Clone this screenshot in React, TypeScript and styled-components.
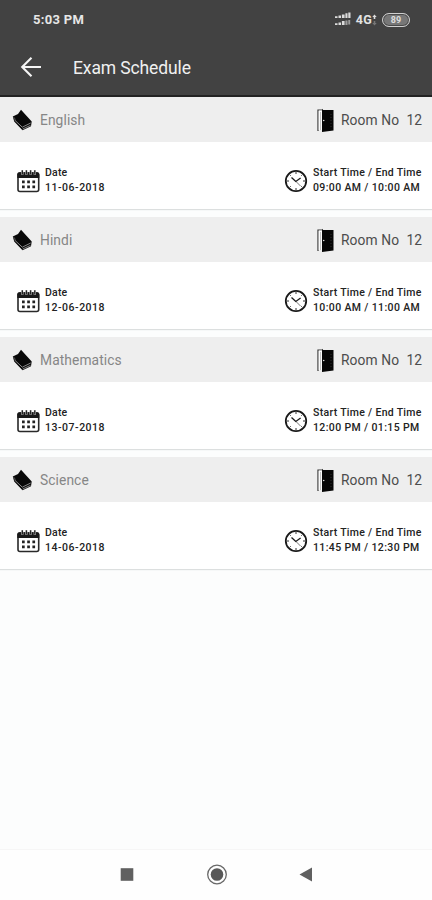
import React from "react";
import styled, { createGlobalStyle } from "styled-components";

const GlobalStyle = createGlobalStyle`
  * { box-sizing: border-box; }
  body { margin: 0; background: #fcfdfd; font-family: Roboto, "Liberation Sans", sans-serif; }
  svg { display: block; flex: none; }
`;

const Screen = styled.div`
  width: 432px;
  height: 900px;
  display: flex;
  flex-direction: column;
  overflow: hidden;
  background: #fcfdfd;
`;

const TopArea = styled.header`
  height: 97px;
  flex: none;
  background: #424242;
  border-bottom: 2px solid #222;
  color: #f4f4f4;
`;

const StatusBar = styled.div`
  height: 39px;
  padding: 0 22px 0 33px;
  display: flex;
  align-items: center;
  justify-content: space-between;
`;

const Clock = styled.span`
  font-size: 13px;
  font-weight: 700;
  letter-spacing: 0.3px;
  color: #e6e6e6;
`;

const StatusIcons = styled.div`
  display: flex;
  align-items: center;
`;

const Network = styled.span`
  margin-left: 4px;
  font-size: 12.5px;
  font-weight: 700;
  letter-spacing: 0.3px;
  color: #e2e2e2;
`;

const Battery = styled.span`
  width: 28px;
  height: 14px;
  margin-left: 5px;
  border: 1.5px solid #cfcfcf;
  border-radius: 7px;
  display: flex;
  align-items: center;
  justify-content: center;
  font-size: 9px;
  font-weight: 700;
  color: #ddd;
  background: #777;
  box-shadow: inset 0 0 0 1px #4a4a4a;
`;

const TitleBar = styled.div`
  height: 56px;
  padding-left: 20px;
  display: flex;
  align-items: center;
  gap: 31px;
`;

const Title = styled.h1`
  margin: 0;
  padding-top: 1px;
  font-size: 17.5px;
  font-weight: 400;
  letter-spacing: -0.12px;
  color: #f0f0f0;
`;

const List = styled.main`
  flex: 1;
`;

const Card = styled.section`
  height: 112px;
  margin-bottom: 8px;
  background: #fff;
  box-shadow: 0 1px 1px #dcdfdf;
`;

const Band = styled.div`
  height: 45px;
  padding: 1px 10px 0 12px;
  display: flex;
  align-items: center;
  justify-content: space-between;
  background: #eee;
`;

const Group = styled.div<{ $gap: number }>`
  display: flex;
  align-items: center;
  gap: ${(p) => p.$gap}px;
`;

const Subject = styled.span`
  font-size: 13.8px;
  line-height: 16px;
  letter-spacing: 0.08px;
  color: #868686;
`;

const Room = styled.span`
  font-size: 13.8px;
  line-height: 16px;
  width: 81px;
  letter-spacing: 0.12px;
  white-space: pre;
  color: #4c4c4c;
`;

const Details = styled.div`
  height: 67px;
  padding: 10px 10px 0 17px;
  display: flex;
  align-items: center;
  justify-content: space-between;
`;

const Lines = styled.div<{ $wide?: boolean }>`
  width: ${(p) => (p.$wide ? "109px" : "auto")};
  padding-bottom: 1px;
  font-size: 10.5px;
  line-height: 15px;
  font-weight: 500;
  white-space: nowrap;
  color: #222;
`;

const Line = styled.div<{ $spacing: number }>`
  letter-spacing: ${(p) => p.$spacing}px;
`;

const NavBar = styled.nav`
  height: 51px;
  flex: none;
  padding: 0 119px 0 120px;
  border-top: 1px solid #f6f6f6;
  background: #fefefe;
  display: flex;
  align-items: center;
  justify-content: space-between;
`;

const SignalIcon = () => (
  <svg width="18" height="15" viewBox="0 0 18 15" fill="#dcdcdc">
    <path d="M1 4.3h2.5V6H1zM4.5 3.5h2.5V6H4.5zM7.9 2.5h2.7V6H7.9zM11.4 1.3h2.1V6h-2.1zM14.3.5h2.2V6h-2.2z" />
    <path d="M1 11.3h2.5V13H1zM4.5 10.5h2.5V13H4.5zM7.9 9h2.7v4H7.9z" />
    <path d="M11.4 8.5h2.1V13h-2.1zM14.3 8h1.9v4.5h-1.9z" opacity=".6" />
  </svg>
);

const DataIcon = () => (
  <svg width="5" height="12" viewBox="0 0 5 12">
    <path d="M.3 3 2.5.5 4.7 3H3.3v2H1.7V3z" fill="#ddd" />
    <path d="M1.7 7h1.6v2h1.4L2.5 11.5.3 9h1.4z" fill="#777" />
  </svg>
);

const BackIcon = () => (
  <svg width="22" height="22" viewBox="0 0 22 22" fill="none" stroke="#f4f4f4" strokeWidth="2.1">
    <path d="M21 11H2.5M11.5 1.7 2.2 11l9.3 9.3" />
  </svg>
);

const BookIcon = () => (
  <svg width="21" height="22" viewBox="0 0 21 22">
    <path d="M9 .8 19.7 12.5 19 17.3 10.5 21.2 2.2 12.6.8 7.4 6 5z" fill="#080808" />
    <path d="M2.4 10.8 10.3 18.2 18.7 14M10.7 20l7.8-3.6" fill="none" stroke="#a6a6a6" strokeWidth=".8" />
    <path d="m1.5 8 2 2.5" stroke="#777" strokeWidth=".7" />
  </svg>
);

const DoorIcon = () => (
  <svg width="17" height="25" viewBox="0 0 17 25">
    <path d="M1 23V2h4" fill="none" stroke="#333" strokeWidth="1.2" />
    <path d="M1.7 2.6H5V22H1.7z" fill="#fafafa" />
    <path d="M3.5 4v18" stroke="#999" strokeWidth=".6" />
    <path d="M5 .7 6.2 2H16.5V22.5L5 24z" fill="#060606" />
    <circle cx="6.7" cy="12.5" r=".8" fill="#ddd" />
    <path d="M14 6v14" stroke="#555" strokeWidth=".5" strokeDasharray="1 2" />
  </svg>
);

const CalendarIcon = () => (
  <svg width="23" height="24" viewBox="0 0 23 24">
    <rect x="1" y="4" width="20.7" height="18.5" rx="2" fill="#fff" stroke="#292929" strokeWidth="1.6" />
    <path d="M.3 9V5.5q0-2.2 2-2.2h18q2 0 2 2.2V9z" fill="#181818" />
    <path d="M5.3 1v4.8M9.4 1v4.8M13.6 1v4.8M17.8 1v4.8" stroke="#ddd" strokeWidth="2.2" />
    <path d="M5.3 1.2v4.2M9.4 1.2v4.2M13.6 1.2v4.2M17.8 1.2v4.2" stroke="#222" strokeWidth="1.4" />
    <path d="M5 12.8h13.5M5 17.8h13.5" stroke="#222" strokeWidth="2.7" strokeDasharray="2.7 2.5" />
  </svg>
);

const TimeIcon = () => (
  <svg width="24" height="24" viewBox="0 0 24 24" fill="none" stroke="#191919">
    <circle cx="12" cy="12" r="10.2" strokeWidth="1.8" />
    <path d="m7.5 8.5 4.3 4 4.8-3.5" strokeWidth="1.3" />
    <path d="m12 12.5 4.5 4.5" strokeWidth=".6" />
    <path d="M12 3v2M12 19v2M3 12h2M19 12h2M5.7 5.7l1 1M17.3 17.3l1 1M5.7 18.3l1-1M17.3 6.7l1-1" strokeWidth=".9" />
  </svg>
);

const exams = [
  { subject: "English", date: "11-06-2018", time: "09:00 AM / 10:00 AM" },
  { subject: "Hindi", date: "12-06-2018", time: "10:00 AM / 11:00 AM" },
  { subject: "Mathematics", date: "13-07-2018", time: "12:00 PM / 01:15 PM" },
  { subject: "Science", date: "14-06-2018", time: "11:45 PM / 12:30 PM" },
];

export default function App() {
  return (
    <Screen>
      <GlobalStyle />
      <TopArea>
        <StatusBar>
          <Clock>5:03 PM</Clock>
          <StatusIcons>
            <SignalIcon />
            <Network>4G</Network>
            <DataIcon />
            <Battery>89</Battery>
          </StatusIcons>
        </StatusBar>
        <TitleBar>
          <BackIcon />
          <Title>Exam Schedule</Title>
        </TitleBar>
      </TopArea>
      <List>
        {exams.map((exam) => (
          <Card key={exam.subject}>
            <Band>
              <Group $gap={7}>
                <BookIcon />
                <Subject>{exam.subject}</Subject>
              </Group>
              <Group $gap={7}>
                <DoorIcon />
                <Room>{"Room No  12"}</Room>
              </Group>
            </Band>
            <Details>
              <Group $gap={5}>
                <CalendarIcon />
                <Lines>
                  <Line $spacing={0.2}>Date</Line>
                  <Line $spacing={0.52}>{exam.date}</Line>
                </Lines>
              </Group>
              <Group $gap={5}>
                <TimeIcon />
                <Lines $wide>
                  <Line $spacing={0.3}>Start Time / End Time</Line>
                  <Line $spacing={0.37}>{exam.time}</Line>
                </Lines>
              </Group>
            </Details>
          </Card>
        ))}
      </List>
      <NavBar>
        <svg width="14" height="14" viewBox="0 0 14 14">
          <rect x=".7" y=".2" width="12.6" height="12.6" fill="#606060" />
        </svg>
        <svg width="22" height="22" viewBox="0 0 22 22">
          <circle cx="11" cy="10.5" r="9.3" fill="none" stroke="#686868" strokeWidth="1.3" />
          <circle cx="11" cy="10.5" r="6.3" fill="#585858" />
        </svg>
        <svg width="14" height="16" viewBox="0 0 14 16">
          <path d="M13 .5v14L.5 7.5z" fill="#606060" />
        </svg>
      </NavBar>
    </Screen>
  );
}
